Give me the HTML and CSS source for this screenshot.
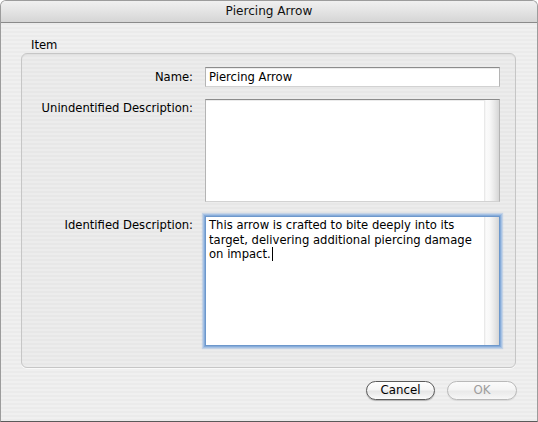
FILE: index.html
```html
<!DOCTYPE html>
<html>
<head>
<meta charset="utf-8">
<title>Piercing Arrow</title>
<link rel="stylesheet" href="styles.css">
</head>
<body>
<div class="window">
  <div class="titlebar">Piercing Arrow</div>
  <div class="content">
    <div class="group-title">Item</div>
    <div class="group">
      <div class="label label-mid">Name:</div>
      <div class="field input">Piercing Arrow</div>

      <div class="label label-top gap1">Unindentified Description:</div>
      <div class="field area area-small gap1">
        <div class="area-text"></div>
        <div class="track"></div>
      </div>

      <div class="label label-top gap2">Identified Description:</div>
      <div class="field area area-large focus gap2">
        <div class="area-text">This arrow is crafted to bite deeply into its target, delivering additional piercing damage on impact.<span class="caret"></span></div>
        <div class="track"></div>
      </div>
    </div>
    <div class="buttons">
      <div class="btn btn-cancel">Cancel</div>
      <div class="btn btn-disabled">OK</div>
    </div>
  </div>
</div>
</body>
</html>
```
FILE: styles.css
```css
html, body {
  margin: 0;
  padding: 0;
  background: #ffffff;
}

body {
  font-family: "DejaVu Sans", "Liberation Sans", sans-serif;
  font-size: 11.6px;
  color: #000;
}

.window {
  width: 538px;
  height: 422px;
  box-sizing: border-box;
  border: 1px solid #9c9c9c;
  border-bottom-color: #5a5a5a;
  border-radius: 6px 6px 0 0;
  overflow: hidden;
  display: flex;
  flex-direction: column;
  background: repeating-linear-gradient(to bottom, #f0f0f0 0, #f0f0f0 2px, #ebebeb 2px, #ebebeb 4px);
}

.titlebar {
  height: 22px;
  flex: none;
  box-sizing: border-box;
  border-bottom: 1px solid #8a8a8a;
  background: linear-gradient(to bottom, #f0f0f0 0, #e6e6e6 40%, #d5d5d5 100%);
  text-align: center;
  font-size: 12.1px;
  line-height: 20px;
  color: #111;
}

.content {
  flex: 1;
  display: flex;
  flex-direction: column;
  padding-top: 15px;
}

.group-title {
  margin-left: 30px;
  line-height: 15px;
  height: 15px;
  color: #000;
}

.group {
  margin-left: 20px;
  width: 495px;
  box-sizing: border-box;
  border: 1px solid #c6c6c6;
  border-radius: 6px;
  background: rgba(0, 0, 0, 0.015);
  box-shadow: inset 0 1px 1px rgba(0, 0, 0, 0.05), 0 1px 0 rgba(255, 255, 255, 0.7);
  padding: 13px 15px 21px 0;
  display: grid;
  grid-template-columns: 171px 295px;
  column-gap: 12px;
  align-items: start;
}

.label {
  text-align: right;
  line-height: 15px;
  color: #000;
  white-space: nowrap;
}

.label-mid {
  padding-top: 3px;
}

.label-top {
  padding-top: 2px;
}

.gap1 {
  margin-top: 12px;
}

.gap2 {
  margin-top: 14px;
}

.field {
  box-sizing: border-box;
  background: #fff;
  border: 1px solid #b4b4b4;
  border-top-color: #8c8c8c;
  border-bottom-color: #d2d2d2;
  box-shadow: inset 0 1px 0 rgba(0, 0, 0, 0.08);
}

.input {
  height: 20px;
  padding: 2px 3px 0;
  line-height: 15px;
  white-space: nowrap;
}

.area {
  display: flex;
}

.area-small {
  height: 103px;
}

.area-large {
  height: 130px;
}

.area-text {
  flex: 1;
  padding: 1px 3px 0;
  line-height: 14.7px;
}

.track {
  width: 15px;
  flex: none;
  background: linear-gradient(to right, #e3e3e3 0, #fbfbfb 2px, #f7f7f7 6px, #e6e6e6 11px, #d6d6d6 100%);
}

.focus {
  border: 1px solid #6d98cc;
  box-shadow: 0 0 0 1px #88acd9, 0 0 0 2px #a6c2e4, 0 0 1px 3px rgba(150, 182, 224, 0.45);
}

.caret {
  display: inline-block;
  width: 0;
  height: 14px;
  border-left: 1px solid #000;
  vertical-align: -3px;
  margin-left: 1px;
}

.buttons {
  display: flex;
  justify-content: flex-end;
  gap: 12px;
  margin-top: 13px;
  margin-right: 20px;
}

.btn {
  height: 19px;
  box-sizing: border-box;
  border-radius: 10px;
  text-align: center;
  line-height: 17px;
  font-size: 11.8px;
}

.btn-cancel {
  width: 69px;
  border: 1px solid #5b5b5b;
  color: #000;
  background: linear-gradient(to bottom, #ffffff 0, #f6f6f6 45%, #e6e6e6 55%, #f3f3f3 85%, #fdfdfd 100%);
  box-shadow: 0 1px 1px rgba(0, 0, 0, 0.25);
}

.btn-disabled {
  width: 70px;
  border: 1px solid #b9b9b9;
  color: #9d9d9d;
  background: linear-gradient(to bottom, #fbfbfb 0, #f4f4f4 45%, #eaeaea 55%, #f2f2f2 85%, #f8f8f8 100%);
  box-shadow: 0 1px 1px rgba(0, 0, 0, 0.08);
}
```
